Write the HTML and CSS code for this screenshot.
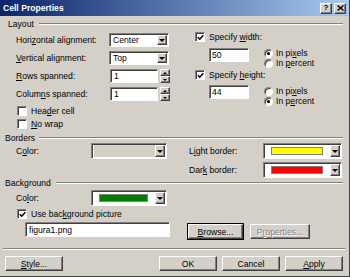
FILE: index.html
```html
<!DOCTYPE html>
<html lang="en">
<head>
    <meta charset="UTF-8">
    <title>Cell Properties</title>
    <link rel="stylesheet" href="styles.css">
</head>
<body>
    <div class="dialog">
        <div class="titlebar">
            <span class="title">Cell Properties</span>
            <div class="caption-buttons">
                <span class="cap-btn">?</span>
                <span class="cap-btn">
                    <svg width="7" height="6" viewBox="0 0 7 6"><path d="M0.5 0.5 L6.5 5.5 M6.5 0.5 L0.5 5.5" stroke="#000" stroke-width="1.4"/></svg>
                </span>
            </div>
        </div>

        <div class="group-head layout-head"><span>Layout</span><i class="rule"></i></div>
        <div class="layout">
            <div class="layout-left">
                <div class="row">
                    <span class="label">Hori<u>z</u>ontal alignment:</span>
                    <div class="combo small"><span class="value">Center</span><span class="drop"><i class="arrow"></i></span></div>
                </div>
                <div class="row">
                    <span class="label"><u>V</u>ertical alignment:</span>
                    <div class="combo small"><span class="value">Top</span><span class="drop"><i class="arrow"></i></span></div>
                </div>
                <div class="row">
                    <span class="label"><u>R</u>ows spanned:</span>
                    <div class="spin">
                        <div class="field spin-field">1</div>
                        <div class="spin-btns"><span class="spin-btn"><i class="arrow up"></i></span><span class="spin-btn"><i class="arrow"></i></span></div>
                    </div>
                </div>
                <div class="row">
                    <span class="label">Colum<u>n</u>s spanned:</span>
                    <div class="spin">
                        <div class="field spin-field">1</div>
                        <div class="spin-btns"><span class="spin-btn"><i class="arrow up"></i></span><span class="spin-btn"><i class="arrow"></i></span></div>
                    </div>
                </div>
                <div class="check-row first-check"><span class="checkbox"></span><span>Hea<u>d</u>er cell</span></div>
                <div class="check-row"><span class="checkbox"></span><span><u>N</u>o wrap</span></div>
            </div>

            <div class="layout-right">
                <div class="check-row"><span class="checkbox checked"><svg width="7" height="7" viewBox="0 0 7 7"><path d="M0.8 3.2 L2.8 5.2 L6.3 1.2" fill="none" stroke="#000" stroke-width="1.5"/></svg></span><span>Specify <u>w</u>idth:</span></div>
                <div class="size-block">
                    <div class="field size-field">50</div>
                    <div class="radios">
                        <div class="radio-row"><span class="radio on"></span><span>In pi<u>x</u>els</span></div>
                        <div class="radio-row"><span class="radio"></span><span>In <u>p</u>ercent</span></div>
                    </div>
                </div>
                <div class="check-row height-check"><span class="checkbox checked"><svg width="7" height="7" viewBox="0 0 7 7"><path d="M0.8 3.2 L2.8 5.2 L6.3 1.2" fill="none" stroke="#000" stroke-width="1.5"/></svg></span><span>Specify <u>h</u>eight:</span></div>
                <div class="size-block second">
                    <div class="field size-field">44</div>
                    <div class="radios">
                        <div class="radio-row"><span class="radio"></span><span>In pi<u>x</u>els</span></div>
                        <div class="radio-row"><span class="radio on"></span><span>In p<u>e</u>rcent</span></div>
                    </div>
                </div>
            </div>
        </div>

        <div class="group-head borders-head"><span>Borders</span><i class="rule"></i></div>
        <div class="borders">
            <div class="borders-left">
                <div class="color-row">
                    <span class="color-label">C<u>o</u>lor:</span>
                    <div class="combo color-combo empty"><span class="value"></span><span class="drop"><i class="arrow"></i></span></div>
                </div>
            </div>
            <div class="borders-right">
                <div class="color-row">
                    <span class="color-label wide">L<u>i</u>ght border:</span>
                    <div class="combo color-combo"><span class="value"><i class="swatch yellow"></i></span><span class="drop"><i class="arrow"></i></span></div>
                </div>
                <div class="color-row">
                    <span class="color-label wide">Dar<u>k</u> border:</span>
                    <div class="combo color-combo"><span class="value"><i class="swatch red"></i></span><span class="drop"><i class="arrow"></i></span></div>
                </div>
            </div>
        </div>

        <div class="group-head background-head"><span>Background</span><i class="rule"></i></div>
        <div class="background">
            <div class="color-row">
                <span class="color-label">Co<u>l</u>or:</span>
                <div class="combo color-combo bg-combo"><span class="value"><i class="swatch green"></i></span><span class="drop"><i class="arrow"></i></span></div>
            </div>
            <div class="check-row picture-check"><span class="checkbox checked"><svg width="7" height="7" viewBox="0 0 7 7"><path d="M0.8 3.2 L2.8 5.2 L6.3 1.2" fill="none" stroke="#000" stroke-width="1.5"/></svg></span><span>Use bac<u>k</u>ground picture</span></div>
            <div class="picture-row">
                <div class="field picture-field">figura1.png</div>
                <span class="button browse"><u>B</u>rowse...</span>
                <span class="button disabled">P<u>r</u>operties...</span>
            </div>
        </div>

        <div class="separator"></div>

        <div class="footer">
            <span class="button"><u>S</u>tyle...</span>
            <div class="footer-right">
                <span class="button">OK</span>
                <span class="button">Cancel</span>
                <span class="button"><u>A</u>pply</span>
            </div>
        </div>
    </div>
</body>
</html>
```

FILE: styles.css
```css
* {
    box-sizing: border-box;
}

body {
    margin: 0;
    font-family: 'Liberation Sans', Arial, sans-serif;
    font-size: 8.6px;
    color: #000;
    background: #d4d0c8;
}

u {
    text-decoration: underline;
}

.dialog {
    width: 350px;
    height: 277px;
    background: #d4d0c8;
    border-right: 1px solid #404040;
    border-bottom: 1px solid #404040;
    overflow: hidden;
}

.titlebar {
    height: 16px;
    background: linear-gradient(to right, #0a246a, #a6caf0);
    display: flex;
    align-items: center;
    justify-content: space-between;
    padding: 0 3px 0 3px;
}

.title {
    color: #fff;
    font-weight: bold;
}

.caption-buttons {
    display: flex;
    gap: 2px;
}

.cap-btn {
    width: 12px;
    height: 11px;
    background: #d4d0c8;
    border: 1px solid;
    border-color: #fff #404040 #404040 #fff;
    box-shadow: inset -1px -1px #808080;
    display: flex;
    align-items: center;
    justify-content: center;
    font-weight: bold;
    font-size: 8px;
    line-height: 1;
}

/* group headers: label followed by an etched line */
.group-head {
    display: flex;
    align-items: center;
    height: 10px;
    margin-right: 6px;
}

.group-head .rule {
    flex: 1;
    height: 2px;
    border-top: 1px solid #808080;
    border-bottom: 1px solid #fff;
}

.layout-head {
    margin-top: 3px;
    padding-left: 8px;
}

.layout-head .rule {
    margin-left: 5px;
}

.borders-head {
    margin-top: 4px;
    padding-left: 5px;
}

.borders-head .rule {
    margin-left: 4px;
}

.background-head {
    padding-left: 5px;
}

.background-head .rule {
    margin-left: 5px;
}

/* sunken and raised frames */
.field,
.combo,
.checkbox {
    background: #fff;
    border: 1px solid;
    border-color: #808080 #fff #fff #808080;
    box-shadow: inset 1px 1px #404040;
}

.drop,
.spin-btn,
.button {
    background: #d4d0c8;
    border: 1px solid;
    border-color: #fff #404040 #404040 #fff;
    box-shadow: inset -1px -1px #808080;
}

.arrow {
    display: block;
    width: 0;
    height: 0;
    border-left: 3px solid transparent;
    border-right: 3px solid transparent;
    border-top: 3px solid #000;
}

.arrow.up {
    border-top: none;
    border-bottom: 3px solid #000;
}

/* layout section */
.layout {
    display: flex;
}

.layout-left {
    width: 195px;
    padding: 4px 0 0 16px;
    display: flex;
    flex-direction: column;
    gap: 4px;
}

.row {
    display: flex;
    align-items: center;
    height: 14px;
}

.label {
    width: 93px;
}

.combo {
    display: flex;
    align-items: stretch;
    padding: 1px 1px 1px 2px;
}

.combo .value {
    flex: 1;
    display: flex;
    align-items: center;
    padding-left: 1px;
}

.combo .drop {
    width: 10px;
    display: flex;
    align-items: center;
    justify-content: center;
}

.combo.small {
    width: 60px;
    height: 14px;
}

.spin {
    display: flex;
    gap: 2px;
    height: 14px;
    margin-left: 1px;
}

.spin-field {
    width: 48px;
    padding-left: 3px;
    display: flex;
    align-items: center;
}

.spin-btns {
    width: 10px;
    display: flex;
    flex-direction: column;
}

.spin-btn {
    flex: 1;
    display: flex;
    align-items: center;
    justify-content: center;
}

.spin-btn .arrow {
    border-left-width: 2px;
    border-right-width: 2px;
    border-top-width: 2px;
}

.spin-btn .arrow.up {
    border-bottom-width: 2px;
}

.check-row {
    display: flex;
    align-items: center;
    gap: 4px;
    height: 10px;
}

.layout-left .check-row {
    padding-left: 1px;
    margin-top: -1px;
}

.layout-left .first-check {
    margin-top: 1px;
}

.checkbox {
    width: 10px;
    height: 10px;
    display: flex;
    align-items: center;
    justify-content: center;
    padding: 1px 0 0 1px;
}

.layout-right {
    padding-top: 3px;
    display: flex;
    flex-direction: column;
}

.size-block {
    display: flex;
    margin-top: 6px;
    padding-left: 14px;
}

.size-block.second {
    margin-top: 5px;
}

.size-field {
    width: 40px;
    height: 14px;
    padding-left: 2px;
    display: flex;
    align-items: center;
}

.radios {
    margin-left: 15px;
    display: flex;
    flex-direction: column;
}

.size-block.second .radios {
    margin-top: 1px;
}

.radio-row {
    display: flex;
    align-items: center;
    gap: 3px;
    height: 10px;
}

.radio {
    width: 9px;
    height: 9px;
    border-radius: 50%;
    background: #fff;
    border: 1px solid;
    border-color: #808080 #fff #fff #808080;
    box-shadow: inset 1px 1px #404040;
    display: flex;
    align-items: center;
    justify-content: center;
}

.radio.on::after {
    content: '';
    width: 3px;
    height: 3px;
    border-radius: 50%;
    background: #000;
}

.height-check {
    margin-top: 2px;
}

/* borders section */
.borders {
    display: flex;
}

.borders-left {
    width: 189px;
    padding-left: 16px;
}

.borders-right {
    display: flex;
    flex-direction: column;
    gap: 3px;
}

.color-row {
    display: flex;
    align-items: center;
    height: 16px;
}

.color-label {
    width: 75px;
}

.color-label.wide {
    width: 74px;
}

.color-combo {
    width: 76px;
    height: 16px;
}

.borders-right .color-combo {
    width: 79px;
}

.color-combo.empty .value {
    background: #d4d0c8;
}

.color-combo .value {
    padding: 2px 7px 2px 5px;
}

.swatch {
    display: block;
    width: 100%;
    height: 8px;
    border: 1px solid #808080;
}

.swatch.yellow {
    background: #ffff00;
}

.swatch.red {
    background: #ff0000;
}

.swatch.green {
    background: #008000;
}

/* background section */
.background {
    padding-left: 16px;
}

.background .color-row {
    margin-top: 2px;
}

.picture-check {
    margin-top: 3px;
    padding-left: 1px;
}

.picture-row {
    display: flex;
    align-items: flex-start;
    margin-top: 3px;
}

.picture-field {
    width: 145px;
    height: 15px;
    margin-left: 9px;
    padding-left: 3px;
    display: flex;
    align-items: center;
}

.button {
    height: 15px;
    display: flex;
    align-items: center;
    justify-content: center;
}

.picture-row .button {
    margin-top: 2px;
}

.browse {
    width: 55px;
    margin-left: 18px;
    outline: 1px solid #000;
}

.disabled {
    width: 60px;
    margin-left: 7px;
    color: #808080;
    text-shadow: 1px 1px #fff;
}

.separator {
    margin: 9px 4px 0 3px;
    height: 2px;
    border-top: 1px solid #808080;
    border-bottom: 1px solid #fff;
}

.footer {
    display: flex;
    justify-content: space-between;
    margin-top: 6px;
    padding: 0 6px 0 5px;
}

.footer .button {
    width: 58px;
}

.footer-right {
    display: flex;
    gap: 5px;
}
```
